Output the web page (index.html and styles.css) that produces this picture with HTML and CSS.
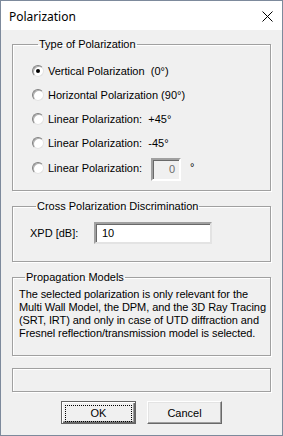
FILE: index.html
```html
<!DOCTYPE html>
<html lang="en">
<head>
  <meta charset="UTF-8">
  <title>Polarization</title>
  <link rel="stylesheet" href="styles.css">
</head>
<body>

  <div class="window">
    <div class="titlebar">
      <span class="title">Polarization</span>
      <svg class="close" width="11" height="11" viewBox="0 0 11 11">
        <path d="M0.5 0.5 L10.5 10.5 M10.5 0.5 L0.5 10.5" stroke="#000" stroke-width="1" fill="none"/>
      </svg>
    </div>

    <div class="content">
      <!-- Type of polarization -->
      <fieldset class="group group-type">
        <legend>Type of Polarization</legend>
        <div class="radio-row"><span class="radio checked"></span>Vertical Polarization&nbsp;&nbsp;(0°)</div>
        <div class="radio-row"><span class="radio"></span>Horizontal Polarization (90°)</div>
        <div class="radio-row"><span class="radio"></span>Linear Polarization:&nbsp;&nbsp;+45°</div>
        <div class="radio-row"><span class="radio"></span>Linear Polarization:&nbsp;&nbsp;-45°</div>
        <div class="radio-row last">
          <span class="radio"></span>
          <span class="radio-label">Linear Polarization:</span>
          <span class="num-box">0</span>
          <span class="deg">°</span>
        </div>
      </fieldset>

      <!-- XPD -->
      <fieldset class="group group-xpd">
        <legend>Cross Polarization Discrimination</legend>
        <div class="xpd-row">
          <span class="xpd-label">XPD [dB]:</span>
          <span class="text-box">10</span>
        </div>
      </fieldset>

      <!-- Info -->
      <fieldset class="group group-prop">
        <legend>Propagation Models</legend>
        <p class="note">The selected polarization is only relevant for the<br>
          Multi Wall Model, the DPM, and the 3D Ray Tracing<br>
          (SRT, IRT) and only in case of UTD diffraction and<br>
          Fresnel reflection/transmission model is selected.</p>
      </fieldset>

      <div class="status-box"></div>

      <div class="buttons">
        <button class="btn btn-default"><span class="focus">OK</span></button>
        <button class="btn">Cancel</button>
      </div>
    </div>
  </div>

</body>
</html>
```

FILE: styles.css
```css
html, body { margin: 0; padding: 0; }
body {
  font-family: "Liberation Sans", Arial, sans-serif;
  font-size: 11px;
  color: #000;
  background: #fff;
}

.window {
  width: 281px;
  height: 434px;
  border: 1px solid #7d8a9c;
  background: #f0f0f0;
  display: flex;
  flex-direction: column;
}

.titlebar {
  height: 29px;
  background: #fff;
  display: flex;
  align-items: center;
  padding: 0 9px 0 8px;
}
.title {
  font-family: "Noto Sans", "Liberation Sans", sans-serif;
  font-size: 12px;
  flex: 1;
  padding-top: 1px;
}
.close { margin-right: 0; margin-top: 1px; }

.content {
  padding: 8px 11px 0 11px;
  display: flex;
  flex-direction: column;
}

.group {
  margin: 0 0 9px 0;
  padding: 0;
  border: 1px solid #a0a0a0;
  box-shadow: 1px 1px 0 #fff, inset 1px 1px 0 #fff;
  min-width: 0;
}
.group legend {
  margin-left: 6px;
  padding: 0 1px;
  line-height: 13px;
  height: 13px;
}

.group-type { padding: 8px 0 10px 19px; }
.radio-row {
  height: 24px;
  display: flex;
  align-items: center;
}
.radio-row.last { height: 25px; }
.radio {
  width: 10px;
  height: 10px;
  border-radius: 50%;
  border: 1px solid;
  border-color: #808080 #e3e3e3 #e3e3e3 #808080;
  background: #fff;
  margin-right: 4px;
  position: relative;
  box-shadow: inset 1px 1px 0 #b0b0b0;
}
.radio.checked::after {
  content: "";
  position: absolute;
  left: 3px;
  top: 3px;
  width: 4px;
  height: 4px;
  border-radius: 50%;
  background: #000;
}
.radio-label { width: 103px; }
.num-box {
  width: 22px;
  height: 19px;
  border: 2px solid;
  border-color: #a0a0a0 #fff #fff #a0a0a0;
  box-shadow: inset 1px 1px 0 #696969;
  color: #6d6d6d;
  text-align: right;
  line-height: 19px;
  padding-right: 4px;
  margin-top: 3px;
}
.deg { margin-left: 9px; margin-top: -2px; }

.group-xpd { padding: 9px 0 17px 17px; }
.xpd-row { display: flex; align-items: center; }
.xpd-label { width: 64px; }
.text-box {
  width: 108px;
  height: 18px;
  border: 2px solid;
  border-color: #a0a0a0 #e3e3e3 #e3e3e3 #a0a0a0;
  box-shadow: inset 1px 1px 0 #696969;
  background: #fff;
  line-height: 18px;
  padding-left: 6px;
}

.group-prop { padding: 4px 2px 15px 6px; }
.note {
  margin: 0;
  line-height: 13px;
  letter-spacing: -0.08px;
  white-space: nowrap;
}

.status-box {
  margin-top: 3px;
  height: 22px;
  border: 1px solid #a0a0a0;
  box-shadow: 1px 1px 0 #fff, inset 1px 1px 0 #fff;
}

.buttons {
  display: flex;
  justify-content: center;
  gap: 11px;
  margin-top: 9px;
}
.btn {
  width: 75px;
  height: 23px;
  font-family: "Liberation Sans", Arial, sans-serif;
  font-size: 11px;
  color: #000;
  background: #f0f0f0;
  border: 1px solid;
  border-color: #fff #696969 #696969 #fff;
  box-shadow: inset -1px -1px 0 #a0a0a0, inset 1px 1px 0 #e3e3e3;
  padding: 0;
}
.btn-default {
  border: 1px solid #646464;
  box-shadow: inset 1px 1px 0 #fff, inset -1px -1px 0 #696969, inset -2px -2px 0 #a0a0a0;
  padding: 3px;
}
.btn-default .focus {
  display: block;
  height: 15px;
  line-height: 15px;
  border: 1px dotted #000;
}
```
